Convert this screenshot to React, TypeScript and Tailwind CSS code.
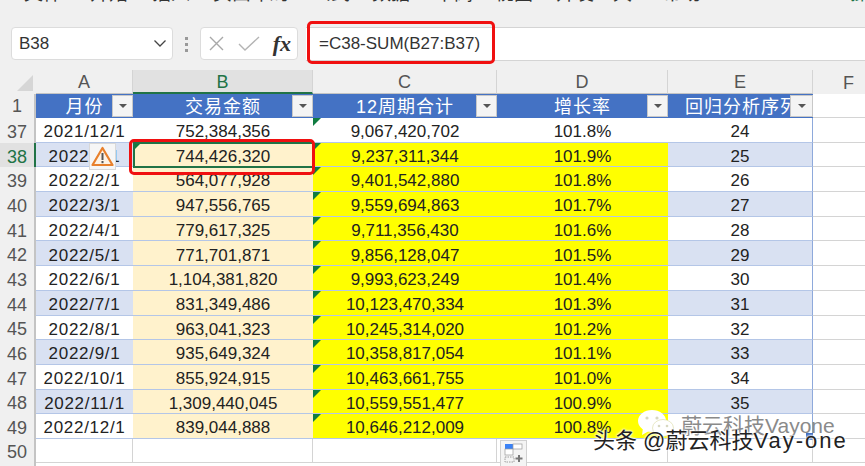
const font = { fontFamily: '"Liberation Sans", "Noto Sans CJK SC", sans-serif' };

const menu: [string, string][] = [
  ["文件", "w-[66px]"],
  ["开始", "w-[62px]"],
  ["插入", "w-[61px]"],
  ["页面布局", "w-[99px]"],
  ["公式", "w-[60px]"],
  ["数据", "w-[63px]"],
  ["审阅", "w-[60px]"],
  ["视图", "w-[61px]"],
  ["开发工具", "w-[107px]"],
  ["帮助", "w-[54px]"],
  ["Power Pivot", "w-[133px] tracking-[1px]"],
  ["操作", "w-[40px] text-[#217346]"],
];
const cols = [
  { n: "A", w: "w-[97px]" },
  { n: "B", w: "w-[180px]" },
  { n: "C", w: "w-[184px]" },
  { n: "D", w: "w-[171px]" },
  { n: "E", w: "w-[145px]" },
];
const heads = ["月份", "交易金额", "12周期合计", "增长率", "回归分析序列"];
const rows: [number, string, string, string, string, string][] = [
  [37, "2021/12/1", "752,384,356", "9,067,420,702", "101.8%", "24"],
  [38, "2022/1/1", "744,426,320", "9,237,311,344", "101.9%", "25"],
  [39, "2022/2/1", "564,077,928", "9,401,542,880", "101.8%", "26"],
  [40, "2022/3/1", "947,556,765", "9,559,694,863", "101.7%", "27"],
  [41, "2022/4/1", "779,617,325", "9,711,356,430", "101.6%", "28"],
  [42, "2022/5/1", "771,701,871", "9,856,128,047", "101.5%", "29"],
  [43, "2022/6/1", "1,104,381,820", "9,993,623,249", "101.4%", "30"],
  [44, "2022/7/1", "831,349,486", "10,123,470,334", "101.3%", "31"],
  [45, "2022/8/1", "963,041,323", "10,245,314,020", "101.2%", "32"],
  [46, "2022/9/1", "935,649,324", "10,358,817,054", "101.1%", "33"],
  [47, "2022/10/1", "855,924,915", "10,463,661,755", "101.0%", "34"],
  [48, "2022/11/1", "1,309,440,045", "10,559,551,477", "100.9%", "35"],
  [49, "2022/12/1", "839,044,888", "10,646,212,009", "100.8%", ""],
];

function Tri() {
  return <span className="absolute left-0 top-0 w-0 h-0 border-t-[8px] border-r-[8px] border-t-[#107c41] border-r-transparent" />;
}

function Filter({ wide }: { wide?: boolean }) {
  return (
    <span className={`absolute right-0 top-[1px] ${wide ? "w-[23px]" : "w-[21px]"} h-[22px] bg-[#f4f4f4] border border-[#c8c8c8] flex items-center justify-center`}>
      <span className="w-0 h-0 border-t-[4px] border-x-[4px] border-t-[#555] border-x-transparent" />
    </span>
  );
}

function RowHead({ n, active, low }: { n: number | string; active?: boolean; low?: boolean }) {
  return (
    <div className={`w-[36px] shrink-0 flex items-center justify-center text-[18px] border-r-2 ${low ? "pt-[4px]" : ""} ${active ? "bg-[#e1e1e1] text-[#217346] border-r-[#217346]" : "bg-[#f0f0f0] text-[#555] border-r-[#c4c4c4]"}`}>
      {n}
    </div>
  );
}

export default function App() {
  return (
    <div className="w-[865px] h-[466px] relative overflow-hidden bg-[#f0f0f0] text-[#222]" style={font}>
      <div className="h-[27px] overflow-hidden flex text-[19px] leading-[20px] text-[#333] pl-[24px] whitespace-nowrap">
        {menu.map(([m, w]) => (
          <span key={m} className={`${w} shrink-0 -mt-[16px]`}>{m}</span>
        ))}
      </div>
      <div className="h-[35px] flex items-stretch relative">
        <div className="ml-[11px] w-[162px] h-[33px] bg-white border border-[#dcdcdc] rounded-[4px] flex items-center justify-between pl-[7px] pr-[5px] text-[17px] text-[#333]">
          B38
          <svg width="14" height="9" viewBox="0 0 14 9"><path d="M1.5 1.5 L7 7 L12.5 1.5" fill="none" stroke="#444" strokeWidth="1.3" /></svg>
        </div>
        <div className="w-[27px] flex flex-col items-center justify-center gap-[3px]">
          <span className="w-[3px] h-[3px] bg-[#999]" />
          <span className="w-[3px] h-[3px] bg-[#999]" />
          <span className="w-[3px] h-[3px] bg-[#999]" />
        </div>
        <div className="w-[98px] h-[33px] bg-white border border-[#dcdcdc] rounded-[4px] flex items-center pl-[7px] pr-[6px] justify-between">
          <svg width="17" height="17" viewBox="0 0 17 17"><path d="M2 2 L15 15 M15 2 L2 15" stroke="#a8a8a8" strokeWidth="1.4" /></svg>
          <svg width="22" height="17" viewBox="0 0 22 17"><path d="M1 9 L7 15 L21 2" fill="none" stroke="#b4b4b4" strokeWidth="1.4" /></svg>
          <span className="text-[22px] italic font-bold text-[#333] leading-none" style={{ fontFamily: '"Liberation Serif", serif' }}>fx</span>
        </div>
        <div className="ml-[8px] flex-1 h-[34px] bg-white border-y border-[#d4d4d4] flex items-center pl-[13px] text-[17px] text-[#333]">
          =C38-SUM(B27:B37)
        </div>
      </div>
      <div className="h-[8px]" />
      <div className="flex h-[24px]">
        <div className="w-[36px] shrink-0 relative bg-[#f0f0f0] overflow-hidden">
          <span className="absolute right-[3px] bottom-[3px] w-0 h-0 border-b-[16px] border-l-[16px] border-b-[#d6d6d6] border-l-transparent" />
        </div>
        {cols.map((c) => (
          <div key={c.n} className={`${c.w} shrink-0 flex items-center justify-center pt-[2px] text-[18px] border-r border-[#d4d4d4] ${c.n === "B" ? "bg-[#e1e1e1] text-[#217346] border-b-2 border-b-[#217346]" : "bg-[#f0f0f0] text-[#555] border-b border-b-[#c4c4c4]"}`}>
            {c.n}
          </div>
        ))}
        <div className="flex-1 flex items-center pl-[30px] pt-[2px] text-[18px] text-[#555]">F</div>
      </div>
      <div className="flex h-[24px]">
        <RowHead n={1} />
        {cols.map((c, i) => (
          <div key={c.n} className={`${c.w} shrink-0 relative bg-[#4472c4] text-white text-[18px] tracking-[1px] pt-[2px] flex items-center overflow-hidden whitespace-nowrap ${i === 4 ? "pl-[17px]" : "justify-center"}`}>
            {heads[i]}
            <Filter wide={i === 4} />
          </div>
        ))}
        <div className="flex-1 bg-white border-b border-[#d4d4d4]" />
      </div>
      {rows.map((r) => {
        const n = r[0];
        const band = n % 2 === 0;
        const active = n === 38;
        const lineB = "border-b border-b-[#b4c6e7]";
        return (
          <div key={n} className="flex h-[24.7px] text-[17px]">
            <RowHead n={n} active={active} low />
            <div className={`w-[97px] shrink-0 flex items-center justify-center pt-[4px] tracking-[0.7px] ${lineB} ${band ? "bg-[#d9e1f2]" : "bg-white"}`}>{r[1]}</div>
            <div className={`w-[180px] shrink-0 relative flex items-center justify-center pt-[4px] ${n === 37 ? "bg-white border-b border-b-[#d4d4d4]" : `bg-[#fff2cc] ${lineB}`}`}>
              {active && <Tri />}
              {r[2]}
            </div>
            <div className={`w-[184px] shrink-0 relative flex items-center justify-center pt-[4px] ${n === 37 ? "bg-white border-b border-b-[#b4c6e7]" : `bg-[#ffff00] ${lineB}`}`}>
              <Tri />
              {r[3]}
            </div>
            <div className={`w-[171px] shrink-0 flex items-center justify-center pt-[4px] ${n === 37 ? "bg-white" : "bg-[#ffff00]"} ${lineB}`}>{r[4]}</div>
            <div className={`w-[145px] shrink-0 flex items-center justify-center pt-[4px] ${lineB} border-r border-r-[#8ea9db] ${band ? "bg-[#d9e1f2]" : "bg-white"}`}>{r[5]}</div>
            <div className="flex-1 bg-white border-b border-[#d4d4d4]" />
          </div>
        );
      })}
      <div className="flex h-[24px] text-[16px]">
        <RowHead n={50} low />
        <div className="w-[97px] shrink-0 bg-white border-r border-b border-[#d4d4d4]" />
        <div className="w-[180px] shrink-0 bg-white border-r border-b border-[#d4d4d4]" />
        <div className="w-[184px] shrink-0 bg-white border-r border-b border-[#d4d4d4]" />
        <div className="w-[171px] shrink-0 bg-white border-r border-b border-[#d4d4d4]" />
        <div className="w-[145px] shrink-0 bg-white border-r border-b border-[#d4d4d4]" />
        <div className="flex-1 bg-white border-b border-[#d4d4d4]" />
      </div>
      <div className="flex h-[3px]">
        <div className="w-[36px] shrink-0 bg-[#f0f0f0] border-r-2 border-r-[#c4c4c4]" />
        <div className="flex-1 bg-white" />
      </div>

      {/* selection */}
      <div className="absolute left-[133px] top-[142px] w-[181px] h-[26px] border-2 border-[#217346]" />
      <div className="absolute left-[129px] top-[139px] w-[186px] h-[36px] border-[3.5px] border-[#f01010] rounded-[5px]" />
      <div className="absolute left-[307px] top-[21px] w-[188px] h-[43px] border-[3.5px] border-[#f01010] rounded-[5px]" />

      {/* warning */}
      <div className="absolute left-[89px] top-[143px] w-[27px] h-[27px] bg-[#f6f6f6] border border-[#d8d8d8] flex items-center justify-center">
        <svg width="23" height="21" viewBox="0 0 23 21">
          <path d="M11.5 2 L21.5 19 L1.5 19 Z" fill="#fdf3e6" stroke="#e8802c" strokeWidth="2.2" strokeLinejoin="round" />
          <path d="M11.5 7 V14" stroke="#555" strokeWidth="2" />
          <path d="M11.5 15 V17.2" stroke="#555" strokeWidth="2" />
        </svg>
      </div>

      {/* paste options */}
      <div className="absolute left-[500px] top-[440px] w-[27px] h-[27px] bg-[#f4f4f4] border border-[#d0d0d0] flex items-center justify-center">
        <svg width="20" height="21" viewBox="0 0 20 21">
          <rect x="1" y="1" width="8" height="5" fill="#3b82f6" />
          <rect x="9" y="1" width="9" height="5" fill="#fff" stroke="#999" strokeWidth="0.7" />
          <rect x="1" y="6" width="8" height="6" fill="#fff" stroke="#999" strokeWidth="0.7" />
          <rect x="1" y="14" width="9" height="5" fill="none" stroke="#888" strokeWidth="0.8" strokeDasharray="1.5 1" />
          <path d="M15 12 V19 M11.5 15.5 H18.5" stroke="#777" strokeWidth="2" />
        </svg>
      </div>

      {/* fill handle */}
      <span className="absolute left-[806px] top-[433px] w-[7px] h-[7px] bg-[#4472c4]" />

      {/* watermark */}
      <svg className="absolute left-[636px] top-[408px]" width="40" height="32" viewBox="0 0 40 32">
        <ellipse cx="16" cy="13" rx="14" ry="11" fill="#fff" />
        <path d="M7 20 L6 27 L13 23 Z" fill="#fff" />
        <ellipse cx="27" cy="20" rx="10.5" ry="8.5" fill="#fff" stroke="#d8d8a0" strokeWidth="0.6" />
        <circle cx="11" cy="10" r="1.6" fill="#d8d8c0" />
        <circle cx="21" cy="10" r="1.6" fill="#d8d8c0" />
        <circle cx="23" cy="18" r="1.3" fill="#d8d8c0" />
        <circle cx="31" cy="18" r="1.3" fill="#d8d8c0" />
      </svg>
      <span className="absolute left-[681px] top-[414px] text-[21px] leading-[24px] text-[#8a8a8a] whitespace-nowrap">蔚云科技Vayone</span>
      <span
        className="absolute left-[593px] top-[428px] text-[22px] leading-[26px] text-[#222] whitespace-nowrap"
        style={{ textShadow: "0 0 2px #fff, 0 0 2px #fff, 0 0 3px #fff" }}
      >
        头条 @蔚云科技<span className="tracking-[2px]">Vay-one</span>
      </span>
    </div>
  );
}
